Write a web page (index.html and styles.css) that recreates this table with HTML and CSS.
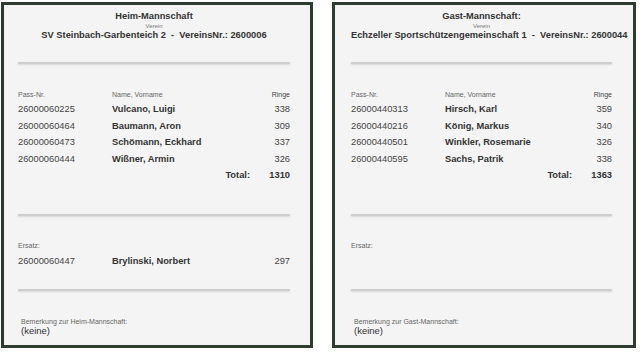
FILE: index.html
```html
<!DOCTYPE html>
<html lang="de">
<head>
<meta charset="utf-8">
<title>Mannschaften</title>
<link rel="stylesheet" href="styles.css">
</head>
<body>
<div class="teams">
  <section class="card card--home">
    <header class="head">
      <div class="title">Heim-Mannschaft</div>
      <div class="sub">Verein</div>
      <div class="club">SV Steinbach-Garbenteich 2&nbsp; - &nbsp;VereinsNr.: 2600006</div>
    </header>
    <hr class="rule rule--first">
    <div class="grid">
      <div class="lbl">Pass-Nr.</div><div class="lbl">Name, Vorname</div><div class="lbl num">Ringe</div>
      <div class="pass">26000060225</div><div class="name">Vulcano, Luigi</div><div class="num">338</div>
      <div class="pass">26000060464</div><div class="name">Baumann, Aron</div><div class="num">309</div>
      <div class="pass">26000060473</div><div class="name">Schömann, Eckhard</div><div class="num">337</div>
      <div class="pass">26000060444</div><div class="name">Wißner, Armin</div><div class="num">326</div>
      <div class="total-lbl">Total:</div><div class="num bold">1310</div>
    </div>
    <hr class="rule rule--second">
    <div class="lbl ersatz-lbl">Ersatz:</div>
    <div class="grid ersatz">
      <div class="pass">26000060447</div><div class="name">Brylinski, Norbert</div><div class="num">297</div>
    </div>
    <hr class="rule rule--third">
    <div class="note">
      <div class="lbl">Bemerkung zur Heim-Mannschaft:</div>
      <div class="note-text">(keine)</div>
    </div>
  </section>
  <section class="card card--guest">
    <header class="head">
      <div class="title">Gast-Mannschaft:</div>
      <div class="sub">Verein</div>
      <div class="club">Echzeller Sportschützengemeinschaft 1&nbsp; - &nbsp;VereinsNr.: 2600044</div>
    </header>
    <hr class="rule rule--first">
    <div class="grid">
      <div class="lbl">Pass-Nr.</div><div class="lbl">Name, Vorname</div><div class="lbl num">Ringe</div>
      <div class="pass">26000440313</div><div class="name">Hirsch, Karl</div><div class="num">359</div>
      <div class="pass">26000440216</div><div class="name">König, Markus</div><div class="num">340</div>
      <div class="pass">26000440501</div><div class="name">Winkler, Rosemarie</div><div class="num">326</div>
      <div class="pass">26000440595</div><div class="name">Sachs, Patrik</div><div class="num">338</div>
      <div class="total-lbl">Total:</div><div class="num bold">1363</div>
    </div>
    <hr class="rule rule--second">
    <div class="lbl ersatz-lbl">Ersatz:</div>
    <div class="grid ersatz"></div>
    <hr class="rule rule--third">
    <div class="note">
      <div class="lbl">Bemerkung zur Gast-Mannschaft:</div>
      <div class="note-text">(keine)</div>
    </div>
  </section>
</div>
</body>
</html>
```

FILE: styles.css
```css
html, body {
  margin: 0;
  padding: 0;
  background: #ffffff;
}
body {
  font-family: "Liberation Sans", Arial, sans-serif;
  color: #3c3c3c;
  font-size: 9.3px;
}
.teams {
  display: flex;
  align-items: flex-start;
  padding: 2px 0 0 1px;
  gap: 19px;
}
.card {
  box-sizing: border-box;
  height: 346px;
  background: #f4f4f4;
  border: 3px solid #2f3b2f;
  padding-top: 6px;
}
.card--home {
  width: 312px;
  padding-left: 14px;
  padding-right: 20px;
}
.card--guest {
  width: 304px;
  padding-left: 16px;
  padding-right: 21px;
}
.head {
  text-align: center;
  color: #333;
}
.title {
  font-weight: bold;
  line-height: 11px;
  font-size: 9.3px;
}
.sub {
  font-size: 6px;
  line-height: 8px;
  color: #777;
}
.club {
  font-weight: bold;
  line-height: 11px;
  white-space: nowrap;
}
.rule {
  border: 0;
  height: 2px;
  margin: 0;
  background: #cfcfcf;
  box-shadow: 0 1px 2px rgba(0, 0, 0, 0.12);
}
.rule--first { margin-top: 21px; }
.rule--second { margin-top: 31px; }
.rule--third { margin-top: 20px; }
.grid {
  display: grid;
  grid-template-columns: 94px 1fr 40px;
  grid-auto-rows: 16.5px;
  align-items: center;
  margin-top: 26px;
}
.grid > .lbl {
  height: 9px;
  align-self: start;
  margin-bottom: 1.75px;
}
.grid {
  grid-template-rows: 10.75px;
}
.lbl {
  font-size: 7px;
  line-height: 9px;
  color: #666;
}
.pass {
  color: #444;
}
.name {
  font-weight: bold;
  color: #333;
}
.num {
  text-align: right;
  color: #444;
}
.bold {
  font-weight: bold;
  color: #333;
}
.total-lbl {
  grid-column: 1 / 3;
  text-align: right;
  font-weight: bold;
  color: #333;
}
.ersatz-lbl {
  margin-top: 24.5px;
}
.grid.ersatz {
  margin-top: 3px;
  grid-template-rows: 16.5px;
  min-height: 16.5px;
}
.note {
  margin-top: 27px;
  padding-left: 3px;
}
.note .lbl {
  line-height: 8px;
}
.note-text {
  font-size: 9.5px;
  line-height: 10px;
  color: #333;
}
```
